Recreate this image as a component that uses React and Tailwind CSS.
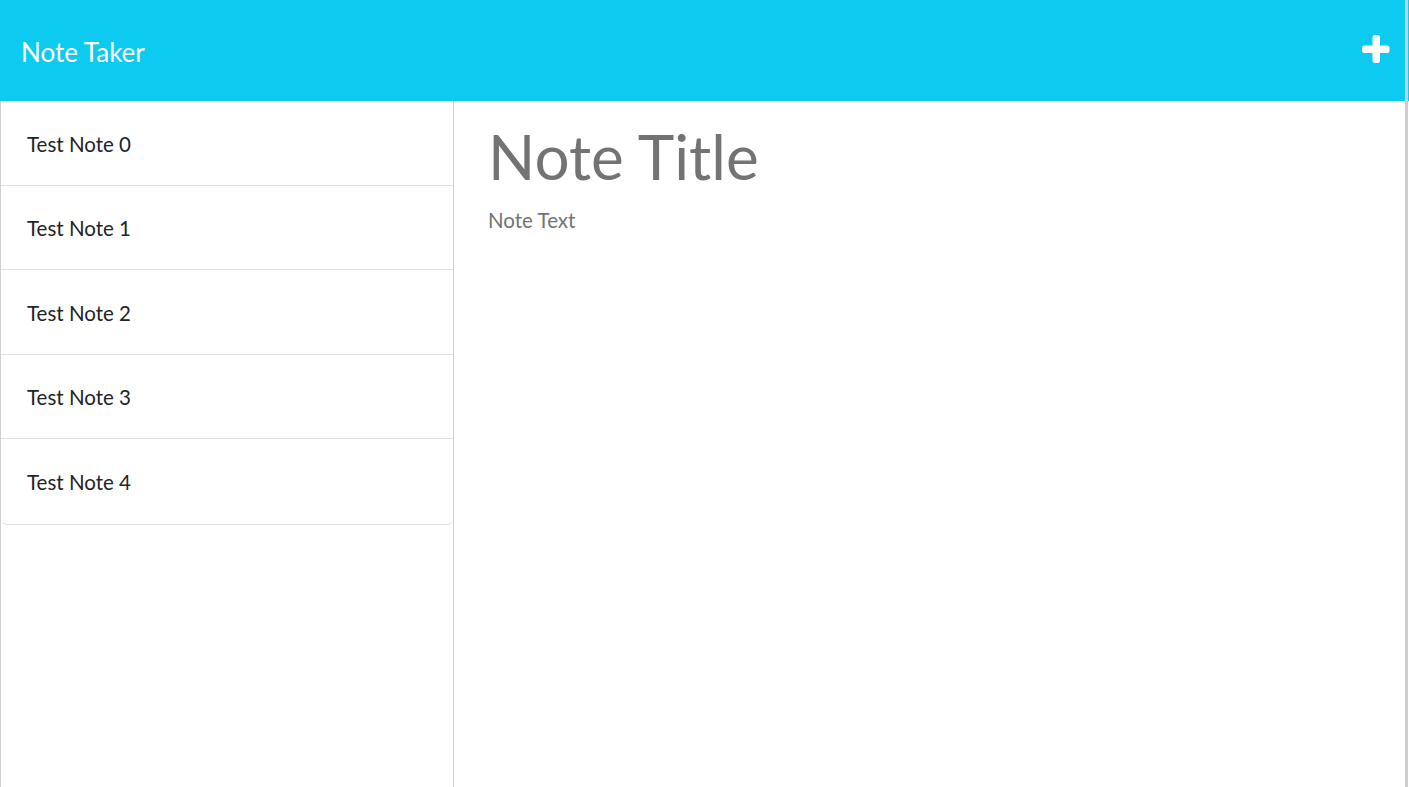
import React from "react";

const notes = ["Test Note 0", "Test Note 1", "Test Note 2", "Test Note 3", "Test Note 4"];

export default function App() {
  return (
    <div className="relative w-[1409px] h-[787px] overflow-hidden bg-white font-['Lato','Noto_Sans',sans-serif]">
      <header className="h-[101px] bg-[#0dcaf0] flex items-center justify-between pl-[21px] pr-[19px]">
        <h1 className="text-[26px] text-white leading-none mt-[3px]">Note Taker</h1>
        <svg width="28" height="28" viewBox="0 0 28 28" className="mb-[3px]">
          <rect x="10.5" y="0" width="7.5" height="28" rx="2.5" fill="#ffffff" />
          <rect x="0" y="10.5" width="27.5" height="7.5" rx="2.5" fill="#ffffff" />
        </svg>
      </header>
      <div className="flex h-[686px]">
        <aside className="w-[454px] shrink-0 border-l border-r border-[#d0d0d0]">
          <ul className="rounded-b-[6px] border-b border-[#dee2e6]">
            {notes.map((n, i) => (
              <li
                key={n}
                className={
                  "flex items-center h-[84.5px] pl-[26px] text-[20.5px] text-[#212529] " +
                  (i < notes.length - 1 ? "border-b border-[#dee2e6]" : "")
                }
              >
                <span className="mt-[3px]">{n}</span>
              </li>
            ))}
          </ul>
        </aside>
        <main className="flex-1 pl-[34px] pt-[15px]">
          <div className="text-[62px] leading-[80px] text-[#737373]">Note Title</div>
          <div className="text-[20.5px] leading-[28px] mt-[10px] text-[#737373]">Note Text</div>
        </main>
      </div>
      <div className="absolute top-0 right-[1px] w-[3px] h-full bg-[#cdcdcd]" />
    </div>
  );
}
